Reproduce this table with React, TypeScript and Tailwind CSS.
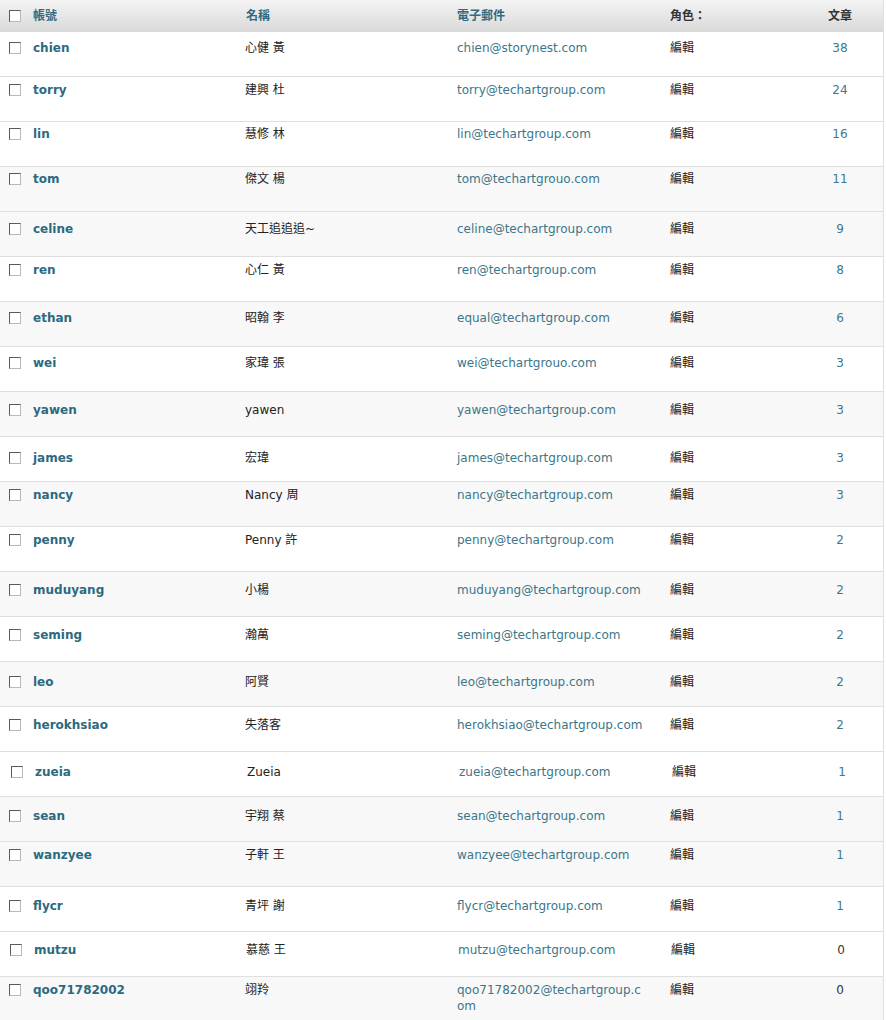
import React from 'react';

type User = {
  login: string;
  name: string;
  email: string;
  posts: number;
  pad: string; // top offset of the row content
  shift?: string;
  alt?: boolean;
};

const users: User[] = [
  { login: 'chien', name: '心健 黃', email: 'chien@storynest.com', posts: 38, pad: 'pt-[8px]' },
  { login: 'torry', name: '建興 杜', email: 'torry@techartgroup.com', posts: 24, pad: 'pt-[5px]' },
  { login: 'lin', name: '慧修 林', email: 'lin@techartgroup.com', posts: 16, pad: 'pt-[4px]' },
  { login: 'tom', name: '傑文 楊', email: 'tom@techartgrouo.com', posts: 11, pad: 'pt-[4px]', alt: true },
  { login: 'celine', name: '天工追追追~', email: 'celine@techartgroup.com', posts: 9, pad: 'pt-[9px]', alt: true },
  { login: 'ren', name: '心仁 黃', email: 'ren@techartgroup.com', posts: 8, pad: 'pt-[5px]' },
  { login: 'ethan', name: '昭翰 李', email: 'equal@techartgroup.com', posts: 6, pad: 'pt-[8px]', alt: true },
  { login: 'wei', name: '家瑋 張', email: 'wei@techartgrouo.com', posts: 3, pad: 'pt-[8px]' },
  { login: 'yawen', name: 'yawen', email: 'yawen@techartgroup.com', posts: 3, pad: 'pt-[10px]', alt: true },
  { login: 'james', name: '宏瑋', email: 'james@techartgroup.com', posts: 3, pad: 'pt-[13px]' },
  { login: 'nancy', name: 'Nancy 周', email: 'nancy@techartgroup.com', posts: 3, pad: 'pt-[5px]', alt: true },
  { login: 'penny', name: 'Penny 許', email: 'penny@techartgroup.com', posts: 2, pad: 'pt-[5px]' },
  { login: 'muduyang', name: '小楊', email: 'muduyang@techartgroup.com', posts: 2, pad: 'pt-[10px]', alt: true },
  { login: 'seming', name: '瀚萬', email: 'seming@techartgroup.com', posts: 2, pad: 'pt-[10px]' },
  { login: 'leo', name: '阿賢', email: 'leo@techartgroup.com', posts: 2, pad: 'pt-[12px]', alt: true },
  { login: 'herokhsiao', name: '失落客', email: 'herokhsiao@techartgroup.com', posts: 2, pad: 'pt-[10px]' },
  { login: 'zueia', name: 'Zueia', email: 'zueia@techartgroup.com', posts: 1, pad: 'pt-[12px]', shift: 'pl-[2px]' },
  { login: 'sean', name: '宇翔 蔡', email: 'sean@techartgroup.com', posts: 1, pad: 'pt-[11px]', alt: true },
  { login: 'wanzyee', name: '子軒 王', email: 'wanzyee@techartgroup.com', posts: 1, pad: 'pt-[5px]', alt: true },
  { login: 'flycr', name: '青坪 謝', email: 'flycr@techartgroup.com', posts: 1, pad: 'pt-[11px]' },
  { login: 'mutzu', name: '慕慈 王', email: 'mutzu@techartgroup.com', posts: 0, pad: 'pt-[10px]', shift: 'pl-[1px]' },
  { login: 'qoo71782002', name: '翊羚', email: 'qoo71782002@techartgroup.com', posts: 0, pad: 'pt-[5px]', alt: true },
];

function Box() {
  return (
    <span className="block w-[12px] h-[12px] bg-white border border-t-[#5a5a5a] border-l-[#5a5a5a] border-r-[#b8b8b8] border-b-[#b8b8b8]" />
  );
}

export default function App() {
  return (
    <div
      className="w-[886px] h-[1020px] overflow-hidden bg-white text-[12px] leading-[16px] text-[#222]"
      style={{ fontFamily: '"DejaVu Sans", "Noto Sans CJK TC", sans-serif' }}
    >
      <div className="w-[884px] border-r border-[#dfdfdf]">
        {/* header */}
        <div className="flex h-[32px] pt-[8px] border-b border-[#dcdcdc] bg-linear-to-b from-[#f4f4f4] to-[#dadada] font-bold">
          <div className="w-[33px] pl-[9px] pt-[2px]"><Box /></div>
          <div className="w-[212px] text-[#2f6a80]">帳號</div>
          <div className="w-[212px] pl-px text-[#2f6a80]">名稱</div>
          <div className="w-[213px] text-[#2f6a80]">電子郵件</div>
          <div className="w-[130px] text-[#333]">角色：</div>
          <div className="w-[80px] text-center text-[#333]">文章</div>
        </div>

        {users.map(u => (
          <div
            key={u.login}
            className={`flex h-[45px] border-b border-[#dfdfdf] ${u.alt ? 'bg-[#f8f8f8]' : 'bg-white'} ${u.pad} ${u.shift ?? ''}`}
          >
            <div className="w-[33px] pl-[9px] pt-[2px]"><Box /></div>
            <div className="w-[212px] font-bold text-[#2b6a80]">{u.login}</div>
            <div className="w-[212px]">{u.name}</div>
            <div className="w-[188px] mr-[25px] break-all text-[#3b7689]">{u.email}</div>
            <div className="w-[130px]">編輯</div>
            <div className={`w-[80px] text-center ${u.posts > 0 ? 'text-[#3f7888]' : 'text-[#333]'}`}>{u.posts}</div>
          </div>
        ))}
      </div>
    </div>
  );
}
